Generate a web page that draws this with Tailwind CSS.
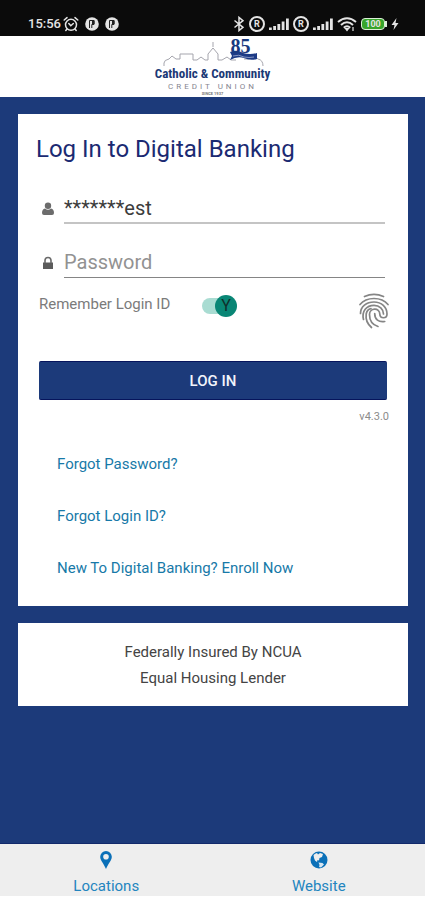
<!DOCTYPE html>
<html lang="en">
<head>
    <meta charset="UTF-8">
    <meta name="viewport" content="width=device-width, initial-scale=1.0">
    <title>Catholic &amp; Community Credit Union | Log In</title>
    <script src="https://cdn.jsdelivr.net/npm/@tailwindcss/browser@4"></script>
</head>
<body class="min-h-screen flex flex-col bg-white font-['Roboto',sans-serif]">
    <!-- Status bar -->
    <div class="h-9 shrink-0 bg-[#0b0b0b] text-[#e4e4e4] flex items-end justify-between pl-7 pr-[26px] pb-1">
        <div class="flex items-center h-4">
            <span class="text-[13px] leading-4 font-medium">15:56</span>
            <svg class="w-4 h-4 ml-0.5" viewBox="0 0 16 16" fill="none" stroke="currentColor" stroke-width="1.5" stroke-linecap="round">
                <circle cx="8" cy="8.8" r="5.5"/>
                <path d="M1.2 4 4 1.6M14.8 4 12 1.6M5.8 7.5 7.8 9.8l2.5-2.3M4 13l-1.2 1.5M12 13l1.2 1.5"/>
            </svg>
            <svg class="w-3.5 h-3.5 ml-1.5" viewBox="0 0 14 14">
                <circle cx="7" cy="7" r="6.8" fill="currentColor"/>
                <path d="M4.5 11V3.5h4.5v4H6.8V11" fill="none" stroke="#222" stroke-width="1"/>
                <path d="M7 3.5h2.5v3.5H7z" fill="#222"/>
            </svg>
            <svg class="w-3.5 h-3.5 ml-1.5" viewBox="0 0 14 14">
                <circle cx="7" cy="7" r="6.8" fill="currentColor"/>
                <path d="M4.5 11V3.5h4.5v4H6.8V11" fill="none" stroke="#222" stroke-width="1"/>
                <path d="M7 3.5h2.5v3.5H7z" fill="#222"/>
            </svg>
        </div>
        <div class="flex items-center h-4">
            <svg class="w-3 h-4" viewBox="0 0 12 16" fill="none" stroke="currentColor" stroke-width="1.5">
                <path d="M1.5 4.5 10 11.3 6 14.6V1.4l4 3.3L1.5 11.5"/>
            </svg>
            <span class="w-4 h-4 ml-1 rounded-full border-2 border-current flex items-center justify-center text-[9px] leading-none font-bold">R</span>
            <svg class="w-5 h-3 ml-1" viewBox="0 0 20 12" fill="currentColor">
                <path d="M0 9.5h2.8V12H0zM4.2 8H7v4H4.2zM8.4 6h2.8v6H8.4zM12.7 3.5h2.8V12h-2.8zM17 0.5h2.8V12H17z"/>
            </svg>
            <span class="w-4 h-4 ml-1 rounded-full border-2 border-current flex items-center justify-center text-[9px] leading-none font-bold">R</span>
            <svg class="w-5 h-3 ml-1" viewBox="0 0 20 12" fill="currentColor">
                <path d="M0 9.5h2.8V12H0zM4.2 8H7v4H4.2zM8.4 6h2.8v6H8.4zM12.7 3.5h2.8V12h-2.8zM17 0.5h2.8V12H17z"/>
            </svg>
            <svg class="w-5 h-4 ml-1" viewBox="0 0 20 16" fill="none" stroke="currentColor" stroke-width="2">
                <path d="M1 6Q10-1.5 19 6M4 9Q10 3.5 16 9M6.8 11.8Q10 8.8 13.2 11.8"/>
                <path d="M8.5 12.5h3L10 14.5zM16 11v4" stroke-width="1.2" fill="currentColor"/>
            </svg>
            <span class="w-6 h-3 ml-1 rounded border border-[#dcefd8] bg-[#37a52b] flex items-center justify-center text-[9px] leading-none font-bold">100</span>
            <span class="w-0.5 h-1.5 bg-[#dcefd8]"></span>
            <svg class="w-2 h-3 ml-1" viewBox="0 0 8 12" fill="currentColor">
                <path d="M5.5 0 0.5 7h3L2.5 12 7.5 5h-3z"/>
            </svg>
        </div>
    </div>

    <!-- Logo -->
    <header class="h-[61px] shrink-0 flex flex-col items-center justify-end text-[#1b3976]">
        <div class="relative flex flex-col items-center">
            <svg class="w-[116px] h-7" viewBox="0 0 116 28" fill="none">
                <path d="M9 28v-3q0-3 5-4l3-3 4 3h4v-5h13v6h4l4-3 4 3h3v-6l5-6 5 6v6h4l5-3 4 3h5M89 21h5l5-3 4 3q5 1 5 7" stroke="#a5a5ad" stroke-width="1"/>
                <path d="M58 9V4" stroke="#a5a5ad" stroke-width="1"/>
                <path d="M75 14q7-3 13 1 7 2 14 0v6q-7 2-13-1-7-2-14 2l2-4z" fill="#1d3b86"/>
                <path d="M78 18q6-2 11 1 5 1 10 0" stroke="#8797c4" stroke-width="1"/>
            </svg>
            <span class="absolute top-0.5 right-5 font-['Liberation_Serif',serif] text-xl leading-3 font-bold text-[#19397f]">85</span>
            <span class="font-['Liberation_Sans_Narrow','Roboto_Condensed','Roboto',sans-serif] text-[13px] leading-4 font-bold whitespace-nowrap">Catholic &amp; Community</span>
            <span class="text-[8px] leading-[9px] tracking-[3px] whitespace-nowrap text-[#85858f]">CREDIT UNION</span>
            <span class="text-[4px] leading-[6px] font-bold text-[#777]">SINCE 1937</span>
        </div>
    </header>

    <main class="flex-1 bg-[#1c3a7a] border-b border-[#12296b] pl-[18px] pr-[17px] pt-[17px] pb-4 flex flex-col gap-[17px]">
        <section class="bg-white pt-[19px] pb-7">
            <h1 class="text-2xl leading-8 text-[#1b2a72] pl-[18px]">Log In to Digital Banking</h1>
            <form class="px-[21px] pt-6">
                <div class="flex items-center pr-0.5">
                    <label for="login-id" class="w-[25px] shrink-0 pt-1">
                        <svg role="img" aria-label="Login ID" class="w-3 h-3.5 ml-[3px]" viewBox="0 0 12 14" fill="#6c6c6c">
                            <circle cx="6" cy="3.8" r="3.2"/>
                            <path d="M3 6.5q3 2.5 6 0 3 .5 3 4.5 0 2-2 2H2q-2 0-2-2 0-4 3-4.5z"/>
                        </svg>
                    </label>
                    <input id="login-id" type="text" value="*******est" class="flex-1 min-w-0 h-[35px] pt-1 text-xl leading-7 text-[#3c3c3c] border-b-2 border-[#c4c4c4] outline-none">
                </div>
                <div class="flex items-center pr-0.5 mt-[19px]">
                    <label for="password" class="w-[25px] shrink-0 pt-1">
                        <svg role="img" aria-label="Password" class="w-3 h-3.5 ml-[3px]" viewBox="0 0 12 14" fill="#5c5c5c">
                            <path d="M1 6.5h10V13H1z"/>
                            <path d="M3 7V4.5q0-3 3-3t3 3V7" fill="none" stroke="#6a6a6a" stroke-width="1.6"/>
                        </svg>
                    </label>
                    <input id="password" type="password" placeholder="Password" class="flex-1 min-w-0 h-[35px] pt-1 text-xl leading-7 placeholder:text-[#929292] border-b border-[#858585] outline-none">
                </div>
                <div class="flex items-start justify-between">
                    <div class="flex items-start pt-4">
                        <label for="remember" class="w-[163px] text-[15px] leading-5 text-[#7b7b7b]">Remember Login ID</label>
                        <span class="relative flex items-center w-[35px] h-6">
                            <input id="remember" type="checkbox" checked class="appearance-none w-[30px] h-4 rounded-full bg-[#a9dcd2]">
                            <span class="absolute right-0 w-[22px] h-[22px] rounded-full bg-[#098675] text-[#102f2b] text-base leading-none flex items-center justify-center pointer-events-none">Y</span>
                        </span>
                    </div>
                    <button type="button" aria-label="Log in with fingerprint" class="mt-[15px] -mr-0.5">
                        <svg class="w-[30px] h-9" viewBox="0 0 30 36" fill="none" stroke="#858585" stroke-width="1.7" stroke-linecap="round">
                            <path d="M5.5 3.5Q15-.8 24.5 3.5"/>
                            <path d="M1 11.500Q6 5.500 15 5.500T29 11.500"/>
                            <path d="M1.500 20.500C1.500 13.500 7.500 9 15 9s13 5 13 12c0 5-7 5-7.200 0 0-6.500-10.300-6.500-10.300.500C10.500 28 14 32 19 33.500"/>
                            <path d="M4.500 26.500C2.500 18 7.500 12.300 15 12.300c5.500 0 9.500 4 9.500 8.700"/>
                            <path d="M12.500 34.500C8.500 31 6.500 26 7.200 21 7.700 18 9.500 16.200 12 15.600"/>
                            <path d="M15.700 20.500c0 6 4 9 10 8"/>
                        </svg>
                    </button>
                </div>
                <button type="submit" class="mt-8 w-full h-[39px] rounded-xs bg-[#1c3a7a] border-y border-[#06145c] text-[15px] leading-5 font-medium text-[#f1f4fb]">LOG IN</button>
            </form>
            <p class="mt-[7px] pr-[19px] text-right text-[11px] leading-5 text-[#8c8c8c]">v4.3.0</p>
            <nav class="mt-[27px] pl-[39px] flex flex-col items-start gap-8 text-[15px] leading-5 text-[#1779a8]">
                <a href="#">Forgot Password?</a>
                <a href="#">Forgot Login ID?</a>
                <a href="#">New To Digital Banking? Enroll Now</a>
            </nav>
        </section>

        <section class="bg-white pt-4 pb-[15px] text-center text-[15px] leading-[26px] text-[#444]">
            <p>Federally Insured By NCUA</p>
            <p>Equal Housing Lender</p>
        </section>
    </main>

    <!-- Bottom tabs -->
    <footer class="shrink-0 mb-1 bg-[#eee] grid grid-cols-2 text-[#2385bf]">
        <a href="#" class="flex flex-col items-center pt-[7px] text-[15px] leading-5">
            <svg class="w-4 h-[18px] mb-[7px]" viewBox="0 0 16 18" fill="#0b70b8">
                <path fill-rule="evenodd" d="M8 0a5.8 5.8 0 0 0-5.8 5.8C2.2 9.5 6 13 8 18c2-5 5.800-8.500 5.800-12.200A5.800 5.800 0 0 0 8 0zm0 3a2.800 2.800 0 1 1 0 5.600A2.800 2.800 0 0 1 8 3z"/>
            </svg>
            Locations
        </a>
        <a href="#" class="flex flex-col items-center pt-[7px] text-[15px] leading-5">
            <svg class="w-[18px] h-[18px] mb-[7px]" viewBox="0 0 18 18">
                <circle cx="9" cy="9" r="8.500" fill="#0b70b8"/>
                <path d="M3.500 4Q5 2.500 7 2l1 1.500L10 2l3 1-1 3-2.500 1L9 9.500 7.500 9 7 11 5 9.500 4 7z" fill="#eee"/>
                <path d="M8.500 11.500l4 .5 1.500 1.500-3 3-2-.5.500-2z" fill="#d5e5f1"/>
            </svg>
            Website
        </a>
    </footer>
</body>
</html>
